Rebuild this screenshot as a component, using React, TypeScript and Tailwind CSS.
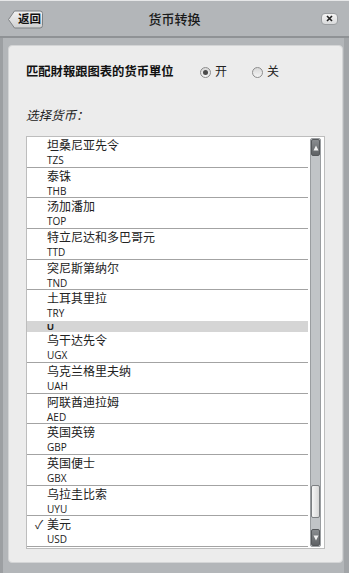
import React from "react";

type Row =
  | { kind: "item"; name: string; code: string; checked?: boolean }
  | { kind: "header"; letter: string };

const rows: Row[] = [
  { kind: "item", name: "坦桑尼亚先令", code: "TZS" },
  { kind: "item", name: "泰铢", code: "THB" },
  { kind: "item", name: "汤加潘加", code: "TOP" },
  { kind: "item", name: "特立尼达和多巴哥元", code: "TTD" },
  { kind: "item", name: "突尼斯第纳尔", code: "TND" },
  { kind: "item", name: "土耳其里拉", code: "TRY" },
  { kind: "header", letter: "U" },
  { kind: "item", name: "乌干达先令", code: "UGX" },
  { kind: "item", name: "乌克兰格里夫纳", code: "UAH" },
  { kind: "item", name: "阿联酋迪拉姆", code: "AED" },
  { kind: "item", name: "英国英镑", code: "GBP" },
  { kind: "item", name: "英国便士", code: "GBX" },
  { kind: "item", name: "乌拉圭比索", code: "UYU" },
  { kind: "item", name: "美元", code: "USD", checked: true },
];

const cjk = "font-['Liberation_Sans','Noto_Sans_CJK_SC',sans-serif]";

function BackButton() {
  return (
    <button className="relative h-[19px] w-[35px]">
      <svg className="absolute inset-0" width="35" height="19" viewBox="0 0 35 19">
        <defs>
          <linearGradient id="bb" x1="0" y1="0" x2="0" y2="1">
            <stop offset="0" stopColor="#f2f2f2" />
            <stop offset="1" stopColor="#cfd0d1" />
          </linearGradient>
        </defs>
        <path
          d="M0.5 9.5 L6.5 1 H32 a2.5 2.5 0 0 1 2.5 2.5 V15.5 a2.5 2.5 0 0 1 -2.5 2.5 H6.5 Z"
          fill="url(#bb)"
          stroke="#7d8083"
        />
      </svg>
      <span className={`relative block pl-[8px] text-[11.5px] font-bold leading-[19px] text-[#111] ${cjk}`}>
        返回
      </span>
    </button>
  );
}

function CloseButton() {
  return (
    <button className="flex h-[12px] w-[17px] items-center justify-center rounded-[4px] border border-[#9a9da0] bg-gradient-to-b from-[#f4f4f4] to-[#dadbdc]">
      <svg width="7" height="7" viewBox="0 0 7 7">
        <path d="M1 1 L6 6 M6 1 L1 6" stroke="#222" strokeWidth="1.6" />
      </svg>
    </button>
  );
}

function Radio({ on, label }: { on: boolean; label: string }) {
  return (
    <div className="flex items-center gap-[4px]">
      <span className="flex h-[11px] w-[11px] items-center justify-center rounded-full border border-[#8c8c8c] bg-gradient-to-b from-[#d8d8d8] to-[#f4f4f4]">
        {on && <span className="h-[5px] w-[5px] rounded-full bg-[#4a4a4a]" />}
      </span>
      <span className={`text-[12px] text-[#222] ${cjk}`}>{label}</span>
    </div>
  );
}

function ScrollArrow({ up }: { up: boolean }) {
  return (
    <div className="flex h-[17px] w-full items-center justify-center rounded-[2px] border border-[#55585b] bg-gradient-to-b from-[#8a8d90] to-[#5f6265]">
      <svg width="6" height="6" viewBox="0 0 6 6">
        <path d={up ? "M3 0.5 L5.5 5.5 H0.5 Z" : "M3 5.5 L5.5 0.5 H0.5 Z"} fill="#f2f2f2" />
      </svg>
    </div>
  );
}

export default function App() {
  return (
    <main className={`flex h-[573px] w-[349px] flex-col overflow-hidden bg-[#b3b6b9] ${cjk}`}>
      <header className="flex h-[38px] shrink-0 items-center border-t border-t-[#e6e7e8] border-b-2 border-b-[#8f9295] px-[8px] pb-[1px]">
        <div className="w-[60px]">
          <BackButton />
        </div>
        <h1 className="flex-1 pt-[3px] text-center text-[13px] font-medium text-[#1a1a1a]">货币转换</h1>
        <div className="flex w-[60px] justify-end pr-[3px] pt-[1px]">
          <CloseButton />
        </div>
      </header>

      <div className="flex flex-1 border-l-[3px] border-l-[#9c9fa2] border-r-[5px] border-r-[#a2a5a8] pt-[7px] pr-[1px] pb-[10px] pl-[5px]">
        <section className="flex flex-1 flex-col rounded-[4px] border border-[#d4d5d6] bg-[#ececec] pt-[17px] pl-[17px] pr-[17px]">
          <div className="flex items-center">
            <p className="w-[174px] text-[12.3px] font-bold leading-[18px] text-[#111]">匹配財報跟图表的货币單位</p>
            <div className="flex gap-[25px]">
              <Radio on={true} label="开" />
              <Radio on={false} label="关" />
            </div>
          </div>

          <p className="mt-[26px] text-[12.5px] italic leading-[18px] text-[#222]">选择货币：</p>

          <div className="mt-[11px] flex h-[413px] border border-[#bdbdbd] bg-white">
            <div className="flex-1 overflow-hidden">
              {rows.map((row, i) =>
                row.kind === "header" ? (
                  <div
                    key={i}
                    className="h-[11px] bg-[#d5d5d5] pl-[20px] font-['Liberation_Sans',sans-serif] text-[9.5px] font-bold leading-[11px] text-[#222]"
                  >
                    {row.letter}
                  </div>
                ) : (
                  <div
                    key={i}
                    className={`flex h-[30.7px] pt-[2px] ${i === 5 ? "" : "border-b border-[#a3a3a3]"}`}
                  >
                    <div className="w-[20px] pl-[8px] text-[12px] leading-[14px] text-[#333]">
                      {row.checked ? "✓" : ""}
                    </div>
                    <div className="flex flex-col">
                      <span className="text-[12px] leading-[14px] text-[#222]">{row.name}</span>
                      <span className="font-['Open_Sans',sans-serif] text-[10px] font-medium leading-[14px] text-[#222]">
                        {row.code}
                      </span>
                    </div>
                  </div>
                )
              )}
            </div>
            <div className="flex w-[16px] shrink-0 flex-col py-[1px] pl-[2px] pr-[3px]">
              <div className="flex flex-1 flex-col rounded-[2px] border border-[#9a9da0] bg-[#c1c4c7]">
                <ScrollArrow up={true} />
                <div className="flex-1" />
                <div className="mb-[11px] h-[33px] rounded-[2px] border border-[#7c7f82] bg-gradient-to-r from-[#f6f6f6] to-[#d8d8d8]" />
                <ScrollArrow up={false} />
              </div>
            </div>
          </div>
        </section>
      </div>
    </main>
  );
}
